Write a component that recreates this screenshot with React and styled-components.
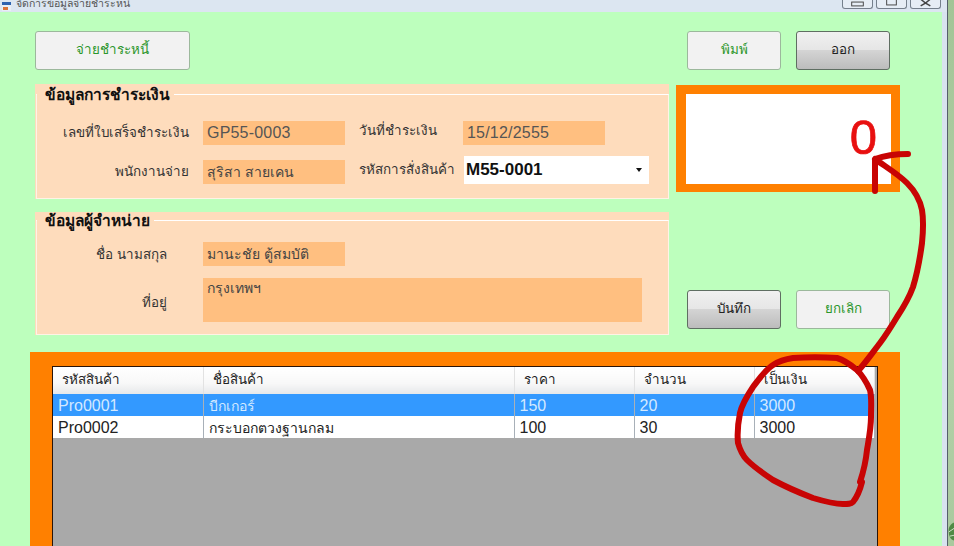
import React from 'react';
import styled, { createGlobalStyle } from 'styled-components';

const thaiFont = `"Liberation Sans", "Noto Sans", Tahoma, sans-serif`;

const GlobalStyle = createGlobalStyle`
    html, body {
        margin: 0;
        padding: 0;
        background: #a5c89a;
    }
    body {
        font-family: ${thaiFont};
        font-size: 14px;
        color: #222;
    }
`;

const rows = [
    { code: 'Pro0001', name: 'บีกเกอร์', price: '150', qty: '20', total: '3000' },
    { code: 'Pro0002', name: 'กระบอกตวงฐานกลม', price: '100', qty: '30', total: '3000' },
];

const App = () => {
    return (
        <Screen>
            <GlobalStyle />
            <Window>
                <TitleBar>
                    <TitleIcon viewBox="0 0 9 9">
                        <rect width="9" height="9" fill="#e8eef6" />
                        <rect y="0" width="9" height="3" fill="#2d62b0" />
                        <rect x="1" y="5" width="5" height="3" fill="#d9743a" />
                    </TitleIcon>
                    <TitleText>จัดการข้อมูลจ่ายชำระหนี้</TitleText>
                    <WindowControls>
                        <WindowControl><ControlMark viewBox="0 0 30 9"><rect x="9" y="3" width="12" height="4" fill="none" stroke="#444" /></ControlMark></WindowControl>
                        <WindowControl><ControlMark viewBox="0 0 30 9"><rect x="10" y="0" width="10" height="6" fill="none" stroke="#444" /></ControlMark></WindowControl>
                        <WindowControl><ControlMark viewBox="0 0 30 9"><path d="M10 0 L15 4 L20 0 M10 7 L15 4 L20 7" fill="none" stroke="#444" strokeWidth="1.5" /></ControlMark></WindowControl>
                    </WindowControls>
                </TitleBar>
                <ClientRow>
                    <Body>
                        <FormGrid>
                            <TopLeft>
                                <ActionButton $wide>จ่ายชำระหนี้</ActionButton>
                            </TopLeft>
                            <ButtonGroup>
                                <ActionButton>พิมพ์</ActionButton>
                                <ActionButton $raised>ออก</ActionButton>
                            </ButtonGroup>
                            <PanelStack>
                                <Panel $height={115} $top={10}>
                                    <Group>
                                        <GroupTitle>ข้อมูลการชำระเงิน</GroupTitle>
                                        <PaymentGrid>
                                            <FieldLabel $up={2}>เลขที่ใบเสร็จชำระเงิน</FieldLabel>
                                            <Field>GP55-0003</Field>
                                            <FieldLabel $left $up={6}>วันที่ชำระเงิน</FieldLabel>
                                            <Field $narrow>15/12/2555</Field>
                                            <FieldLabel $up={2}>พนักงานจ่าย</FieldLabel>
                                            <Field $thai>สุริสา สายเคน</Field>
                                            <FieldLabel $left $up={6}>รหัสการสั่งสินค้า</FieldLabel>
                                            <Combo>
                                                <span>M55-0001</span>
                                                <ComboArrow />
                                            </Combo>
                                        </PaymentGrid>
                                    </Group>
                                </Panel>
                                <Panel $height={123} $top={8}>
                                    <Group>
                                        <GroupTitle>ข้อมูลผู้จำหน่าย</GroupTitle>
                                        <SupplierGrid>
                                            <FieldLabel>ชื่อ นามสกุล</FieldLabel>
                                            <Field $thai>มานะชัย ตู้สมบัติ</Field>
                                            <FieldLabel $down={4}>ที่อยู่</FieldLabel>
                                            <AddressField $thai>กรุงเทพฯ</AddressField>
                                        </SupplierGrid>
                                    </Group>
                                </Panel>
                            </PanelStack>
                            <SideColumn>
                                <TotalBox>0</TotalBox>
                                <ButtonGroup>
                                    <ActionButton $raised>บันทึก</ActionButton>
                                    <ActionButton>ยกเลิก</ActionButton>
                                </ButtonGroup>
                            </SideColumn>
                        </FormGrid>
                        <GridPanel>
                            <GridFrame>
                                <DataTable>
                                    <colgroup>
                                        <col style={{ width: 150 }} />
                                        <col style={{ width: 311 }} />
                                        <col style={{ width: 120 }} />
                                        <col style={{ width: 120 }} />
                                        <col style={{ width: 120 }} />
                                    </colgroup>
                                    <thead>
                                        <tr>
                                            <HeadCell>รหัสสินค้า</HeadCell>
                                            <HeadCell>ชื่อสินค้า</HeadCell>
                                            <HeadCell>ราคา</HeadCell>
                                            <HeadCell>จำนวน</HeadCell>
                                            <HeadCell>เป็นเงิน</HeadCell>
                                        </tr>
                                    </thead>
                                    <tbody>
                                        {rows.map((row, i) => (
                                            <DataRow key={row.code} $selected={i === 0}>
                                                <DataCell><CellText>{row.code}</CellText></DataCell>
                                                <DataCell><CellText $thai>{row.name}</CellText></DataCell>
                                                <DataCell><CellText>{row.price}</CellText></DataCell>
                                                <DataCell><CellText>{row.qty}</CellText></DataCell>
                                                <DataCell><CellText>{row.total}</CellText></DataCell>
                                            </DataRow>
                                        ))}
                                    </tbody>
                                </DataTable>
                            </GridFrame>
                        </GridPanel>
                    </Body>
                    <WindowEdge />
                </ClientRow>
            </Window>
            <Desktop>
                <Leaf viewBox="0 0 7 24">
                    <path d="M7 2 C2 4 0 9 1 14 C1 18 3 22 7 23 Z" fill="#4f8a45" />
                    <path d="M1 13 L7 9 M2 18 L7 17" stroke="#dfeeda" strokeWidth="1" />
                </Leaf>
            </Desktop>
            <Scribble viewBox="0 0 954 546">
                <path d="M908 154 C897 154 886 155 875 159 L875 191 M875 159 C886 167 898 174 907 183 C916 192 920 200 922 210 C924 222 923 233 922 243 C920 258 917 274 913 287 C909 298 903 308 897 317 C891 327 886 335 880 343 C873 352 866 362 858 371" />
                <path d="M860 482 C864 470 866 460 867 450 C869 438 871 428 871 417 C871 406 872 398 870 390 C866 381 863 376 857 370 C851 365 844 360 837 358 C822 357 808 357 793 358 C786 359 779 361 773 365 C765 370 759 379 753 387 C747 396 742 404 740 413 C738 423 737 433 738 443 C740 450 743 456 747 460 C755 468 764 474 773 480 C786 487 800 493 813 498 C823 501 833 504 843 504 C848 504 851 504 853 502 C857 497 860 490 862 482" />
            </Scribble>
        </Screen>
    );
};

export default App;

const Screen = styled.div`
    position: relative;
    display: flex;
    width: 954px;
    height: 546px;
    overflow: hidden;
`;

const Window = styled.div`
    flex: 1;
    display: flex;
    flex-direction: column;
    min-width: 0;
`;

const Desktop = styled.div`
    width: 7px;
    display: flex;
    align-items: flex-end;
    padding-bottom: 3px;
    box-sizing: border-box;
    background: linear-gradient(#a2c496, #b5d2aa 60%, #a9c99e);
    border-left: 1px solid #55606a;
`;

const Leaf = styled.svg`
    width: 7px;
    height: 24px;
`;

const TitleBar = styled.div`
    height: 12px;
    flex: none;
    display: flex;
    align-items: flex-end;
    overflow: hidden;
    background: #dce6f1;
    padding-left: 2px;
`;

const TitleIcon = styled.svg`
    width: 9px;
    height: 9px;
    flex: none;
    margin-bottom: 1px;
`;

const TitleText = styled.div`
    margin-left: 5px;
    font-size: 10.5px;
    line-height: 12px;
    color: #555;
    position: relative;
    top: -3px;
    white-space: nowrap;
`;

const WindowControls = styled.div`
    margin-left: auto;
    margin-right: 6px;
    margin-bottom: 3px;
    display: flex;
    gap: 3px;
    align-self: flex-end;
`;

const WindowControl = styled.div`
    width: 29px;
    height: 9px;
    border: 1px solid #75808c;
    border-top: 0;
    border-radius: 0 0 3px 3px;
    background: #e6edf5;
`;

const ControlMark = styled.svg`
    display: block;
    width: 29px;
    height: 9px;
`;

const ClientRow = styled.div`
    flex: 1;
    display: flex;
    min-height: 0;
`;

const Body = styled.div`
    flex: 1;
    display: flex;
    flex-direction: column;
    min-width: 0;
    background: #bdffbd;
    padding-left: 30px;
`;

const WindowEdge = styled.div`
    width: 5px;
    background: #d8e3ef;
`;

const FormGrid = styled.div`
    display: grid;
    grid-template-columns: 641px 224px;
    grid-template-rows: 39px 251px;
    row-gap: 14px;
    padding: 19px 0 0 5px;
`;

const TopLeft = styled.div`
    display: flex;
`;

const ButtonGroup = styled.div`
    display: flex;
    gap: 15px;
    padding-left: 11px;
`;

const ActionButton = styled.button`
    width: ${(p) => (p.$wide ? '155px' : '94px')};
    height: 39px;
    padding: 0 0 2px;
    border-radius: 3px;
    font-family: ${thaiFont};
    font-size: 13.4px;
    font-weight: 400;
    color: ${(p) => (p.$raised ? '#222' : '#2b962b')};
    border: 1px solid ${(p) => (p.$raised ? '#5f6e62' : '#9cb89c')};
    background: ${(p) =>
        p.$raised
            ? 'linear-gradient(#f0f0f0, #e6e6e6 48%, #d4d4d4 50%, #bcbcbc)'
            : '#f2f2f2'};
`;

const PanelStack = styled.div`
    display: flex;
    flex-direction: column;
    gap: 13px;
    width: 634px;
`;

const Panel = styled.div`
    height: ${(p) => p.$height}px;
    box-sizing: border-box;
    padding: ${(p) => p.$top}px 0 0 1px;
    background: #fedcbc;
    display: flex;
`;

const Group = styled.div`
    position: relative;
    flex: 1;
    border: 1px solid #fff3e6;
    border-top-color: #ffffff;
`;

const GroupTitle = styled.div`
    position: absolute;
    left: 0;
    top: -9px;
    padding: 0 4px 0 8px;
    background: #fedcbc;
    font-weight: 700;
    font-size: 15.5px;
    line-height: 18px;
    color: #111;
`;

const PaymentGrid = styled.div`
    display: grid;
    grid-template-columns: 152px 142px 90px 186px;
    grid-template-rows: 24px 24px;
    column-gap: 14px;
    row-gap: 15px;
    padding-top: 26px;
    align-items: center;
`;

const SupplierGrid = styled.div`
    display: grid;
    grid-template-columns: 130px 142px;
    grid-template-rows: 24px 44px;
    column-gap: 36px;
    row-gap: 12px;
    padding-top: 21px;
    align-items: center;
`;

const FieldLabel = styled.div`
    text-align: ${(p) => (p.$left ? 'left' : 'right')};
    white-space: nowrap;
    font-size: 13.4px;
    color: #333;
    padding-bottom: ${(p) => p.$up || 0}px;
    padding-top: ${(p) => p.$down || 0}px;
`;

const Field = styled.div`
    height: 24px;
    line-height: 24px;
    width: ${(p) => (p.$narrow ? '142px' : 'auto')};
    padding-left: 4px;
    box-sizing: border-box;
    background: #ffbf80;
    font-size: ${(p) => (p.$thai ? '14px' : '16px')};
    letter-spacing: ${(p) => (p.$thai ? '0' : '0.2px')};
    color: ${(p) => (p.$thai ? '#444' : '#555')};
    white-space: nowrap;
`;

const AddressField = styled(Field)`
    width: 439px;
    height: 44px;
    line-height: 21px;
`;

const Combo = styled.div`
    width: 185px;
    height: 28px;
    justify-self: end;
    align-self: end;
    box-sizing: border-box;
    background: #fff;
    padding: 0 7px 0 2px;
    display: flex;
    align-items: center;
    justify-content: space-between;
    font-family: "Liberation Sans", sans-serif;
    font-weight: 700;
    font-size: 17px;
    color: #111;
`;

const ComboArrow = styled.i`
    width: 0;
    height: 0;
    border-left: 3.5px solid transparent;
    border-right: 3.5px solid transparent;
    border-top: 4px solid #111;
`;

const SideColumn = styled.div`
    display: flex;
    flex-direction: column;
    justify-content: space-between;
    padding: 1px 0 6px;
`;

const TotalBox = styled.div`
    width: 224px;
    height: 107px;
    box-sizing: border-box;
    border: solid #ff8000;
    border-width: 9px 9px 8px 10px;
    background: #fff;
    font-family: "Liberation Sans", sans-serif;
    font-size: 49px;
    line-height: 54px;
    color: #e81010;
    -webkit-text-stroke: 0.7px #e81010;
    text-align: right;
    padding: 16px 14px 0 0;
`;

const GridPanel = styled.div`
    flex: 1;
    min-height: 0;
    margin-top: 17px;
    width: 870px;
    box-sizing: border-box;
    padding: 14px 22px 0;
    background: #ff8000;
    display: flex;
`;

const GridFrame = styled.div`
    flex: 1;
    background: #a9a9a9;
    border: 1px solid #2a1408;
    border-bottom: 0;
`;

const DataTable = styled.table`
    border-collapse: collapse;
    table-layout: fixed;
    width: 821px;
    font-family: ${thaiFont};
`;

const HeadCell = styled.th`
    height: 27px;
    padding: 0 0 2px 9px;
    box-sizing: border-box;
    text-align: left;
    font-size: 13.4px;
    font-weight: 400;
    color: #222;
    background: linear-gradient(#ffffff, #f8f8f8 60%, #e6e8ea);
    border-right: 1px solid #e2e2e2;
`;

const DataRow = styled.tr`
    background: ${(p) => (p.$selected ? '#3399ff' : '#ffffff')};
    color: ${(p) => (p.$selected ? '#d4e9ff' : '#222')};
`;

const DataCell = styled.td`
    padding: 0 0 0 5px;
    border-right: 1px solid #a8b0b8;
`;

const CellText = styled.div`
    height: 22px;
    line-height: 24px;
    overflow: hidden;
    white-space: nowrap;
    font-size: ${(p) => (p.$thai ? '14px' : '16px')};
`;

const Scribble = styled.svg`
    position: absolute;
    left: 0;
    top: 0;
    width: 954px;
    height: 546px;
    pointer-events: none;

    path {
        fill: none;
        stroke: #c80404;
        stroke-width: 6;
        stroke-linecap: round;
        stroke-linejoin: round;
    }
`;
